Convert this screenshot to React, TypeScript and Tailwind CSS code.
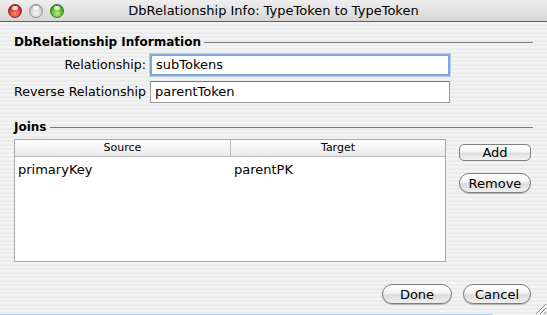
import React from "react"

const font = { fontFamily: '"DejaVu Sans", "Liberation Sans", sans-serif' }

const Light = ({ tone }: { tone: "red" | "gray" | "green" }) => {
  const cls =
    tone === "red"
      ? "bg-[radial-gradient(circle_at_50%_70%,#ff8a80_0%,#e0332b_55%,#8e1a14_100%)] border-[#8a2a25]"
      : tone === "green"
        ? "bg-[radial-gradient(circle_at_50%_70%,#b6f28a_0%,#4fb623_55%,#2a6e10_100%)] border-[#3d7a22]"
        : "bg-[radial-gradient(circle_at_50%_70%,#f4f4f4_0%,#d2d2d2_55%,#9a9a9a_100%)] border-[#8e8e8e]"
  return (
    <div className={`relative h-[14px] w-[14px] rounded-full border ${cls}`}>
      <div className="absolute left-[3px] top-[1px] h-[4px] w-[6px] rounded-full bg-white/80" />
    </div>
  )
}

const SectionTitle = ({ label }: { label: string }) => (
  <div className="flex items-center gap-[3px]">
    <span className="whitespace-nowrap text-[12px] font-bold leading-[16px] text-black">{label}</span>
    <div className="h-px flex-1 bg-[#7a7a7a]" />
  </div>
)

const TextField = ({ value, focused }: { value: string; focused?: boolean }) => (
  <div
    className={`flex h-[22px] w-[300px] items-center bg-white pl-[4px] text-[13px] text-black ${
      focused
        ? "border-2 border-[#7fa6d8] shadow-[0_0_0_1px_#b7cde9]"
        : "border border-[#9a9a9a] border-t-[#7a7a7a]"
    }`}
  >
    {value}
  </div>
)

const PillButton = ({ label, width }: { label: string; width: string }) => (
  <button
    type="button"
    className={`flex h-[20px] ${width} items-center justify-center rounded-full border border-[#7e7e7e] bg-[linear-gradient(#ffffff_0%,#f4f4f4_45%,#dcdcdc_55%,#f0f0f0_100%)] text-[13px] leading-none text-black shadow-[0_1px_1px_rgba(0,0,0,0.25)]`}
  >
    {label}
  </button>
)

export default function App() {
  return (
    <div
      style={font}
      className="relative flex h-[315px] w-[547px] flex-col overflow-hidden bg-[repeating-linear-gradient(#ececec_0px,#ececec_2px,#f3f3f3_2px,#f3f3f3_4px)]"
    >
      {/* title bar */}
      <div className="relative flex h-[22px] shrink-0 items-center justify-center border-b border-[#5e5e5e] bg-[linear-gradient(#eeeeee,#d6d6d6)]">
        <div className="absolute left-[8px] top-[4px] flex gap-[7px]">
          <Light tone="red" />
          <Light tone="gray" />
          <Light tone="green" />
        </div>
        <span className="text-[13px] text-black">DbRelationship Info: TypeToken to TypeToken</span>
      </div>

      <div className="flex flex-1 flex-col pl-[14px] pr-[14px] pt-[12px]">
        <SectionTitle label="DbRelationship Information" />

        <div className="mt-[4px] flex flex-col gap-[5px]">
          <div className="flex items-center">
            <span className="w-[132px] whitespace-nowrap text-right text-[12.6px] text-black">Relationship:</span>
            <div className="ml-[4px]">
              <TextField value="subTokens" focused />
            </div>
          </div>
          <div className="flex items-center">
            <span className="w-[132px] whitespace-nowrap text-right text-[12.6px] text-black">Reverse Relationship</span>
            <div className="ml-[4px]">
              <TextField value="parentToken" />
            </div>
          </div>
        </div>

        <div className="mt-[16px]">
          <SectionTitle label="Joins" />
        </div>

        <div className="mt-[4px] flex">
          <div className="flex h-[123px] w-[432px] flex-col border border-[#a8a8a8] bg-white">
            <div className="flex h-[17px] border-b border-[#bdbdbd] bg-[linear-gradient(#ffffff,#e9e9e9)] text-[11px] text-black">
              <div className="flex w-[216px] items-center justify-center border-r border-[#bdbdbd]">Source</div>
              <div className="flex flex-1 items-center justify-center">Target</div>
            </div>
            <div className="flex h-[26px] items-center text-[13px] text-black">
              <div className="w-[216px] pl-[3px]">primaryKey</div>
              <div className="pl-[3px]">parentPK</div>
            </div>
          </div>

          <div className="ml-[13px] flex flex-col gap-[12px] pt-[5px]">
            <button
              type="button"
              className="flex h-[17px] w-[72px] items-center justify-center rounded-[5px] border border-[#7e7e7e] bg-[linear-gradient(#ffffff_0%,#f4f4f4_45%,#dddddd_55%,#f2f2f2_100%)] text-[13px] leading-none text-black"
            >
              Add
            </button>
            <PillButton label="Remove" width="w-[72px]" />
          </div>
        </div>

        <div className="mt-[22px] flex justify-end gap-[11px] pr-[2px]">
          <PillButton label="Done" width="w-[70px]" />
          <PillButton label="Cancel" width="w-[68px]" />
        </div>
      </div>

      <div className="h-px w-[493px] shrink-0 bg-[#a9cdf2]" />

      <svg className="absolute bottom-0 right-0" width="14" height="14" viewBox="0 0 14 14">
        <path d="M13 3 L3 13 M13 7 L7 13 M13 11 L11 13" stroke="#8a8a8a" strokeWidth="1" />
        <path d="M13 4 L4 13 M13 8 L8 13" stroke="#ffffff" strokeWidth="1" />
      </svg>
    </div>
  )
}
